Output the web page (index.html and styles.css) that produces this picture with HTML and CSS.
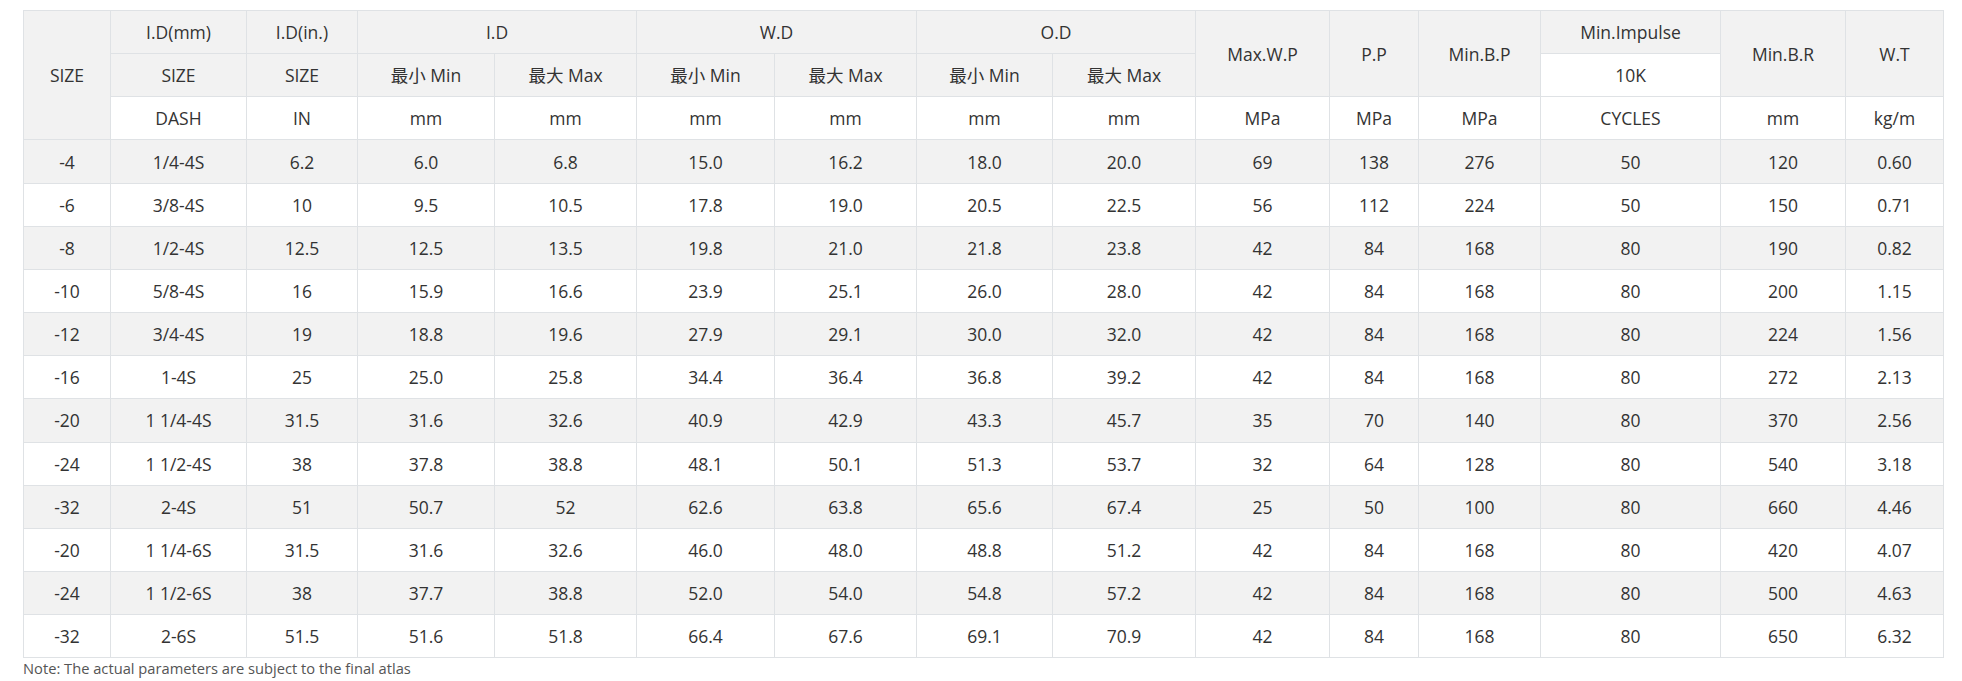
FILE: index.html
```html
<!DOCTYPE html>
<html lang="zh">
<head>
<meta charset="utf-8">
<title>Hose specification</title>
<link rel="stylesheet" href="styles.css">
</head>
<body>
<div class="wrap">
<table class="spec">
<colgroup>
<col style="width:87px"><col style="width:136px"><col style="width:111px"><col style="width:137px"><col style="width:142px"><col style="width:138px"><col style="width:142px"><col style="width:136px"><col style="width:143px"><col style="width:134px"><col style="width:89px"><col style="width:122px"><col style="width:180px"><col style="width:125px"><col style="width:98px">
</colgroup>
<thead>
<tr class="hd">
<td rowspan="3">SIZE</td>
<td>I.D(mm)</td>
<td>I.D(in.)</td>
<td colspan="2">I.D</td>
<td colspan="2">W.D</td>
<td colspan="2">O.D</td>
<td rowspan="2">Max.W.P</td>
<td rowspan="2">P.P</td>
<td rowspan="2">Min.B.P</td>
<td>Min.Impulse</td>
<td rowspan="2">Min.B.R</td>
<td rowspan="2">W.T</td>
</tr>
<tr class="hd">
<td>SIZE</td>
<td>SIZE</td>
<td>最小 Min</td>
<td>最大 Max</td>
<td>最小 Min</td>
<td>最大 Max</td>
<td>最小 Min</td>
<td>最大 Max</td>
<td class="white">10K</td>
</tr>
<tr class="units">
<td>DASH</td><td>IN</td><td>mm</td><td>mm</td><td>mm</td><td>mm</td><td>mm</td><td>mm</td><td>MPa</td><td>MPa</td><td>MPa</td><td>CYCLES</td><td>mm</td><td>kg/m</td>
</tr>
</thead>
<tbody>
<tr><td>-4</td><td>1/4-4S</td><td>6.2</td><td>6.0</td><td>6.8</td><td>15.0</td><td>16.2</td><td>18.0</td><td>20.0</td><td>69</td><td>138</td><td>276</td><td>50</td><td>120</td><td>0.60</td></tr>
<tr><td>-6</td><td>3/8-4S</td><td>10</td><td>9.5</td><td>10.5</td><td>17.8</td><td>19.0</td><td>20.5</td><td>22.5</td><td>56</td><td>112</td><td>224</td><td>50</td><td>150</td><td>0.71</td></tr>
<tr><td>-8</td><td>1/2-4S</td><td>12.5</td><td>12.5</td><td>13.5</td><td>19.8</td><td>21.0</td><td>21.8</td><td>23.8</td><td>42</td><td>84</td><td>168</td><td>80</td><td>190</td><td>0.82</td></tr>
<tr><td>-10</td><td>5/8-4S</td><td>16</td><td>15.9</td><td>16.6</td><td>23.9</td><td>25.1</td><td>26.0</td><td>28.0</td><td>42</td><td>84</td><td>168</td><td>80</td><td>200</td><td>1.15</td></tr>
<tr><td>-12</td><td>3/4-4S</td><td>19</td><td>18.8</td><td>19.6</td><td>27.9</td><td>29.1</td><td>30.0</td><td>32.0</td><td>42</td><td>84</td><td>168</td><td>80</td><td>224</td><td>1.56</td></tr>
<tr><td>-16</td><td>1-4S</td><td>25</td><td>25.0</td><td>25.8</td><td>34.4</td><td>36.4</td><td>36.8</td><td>39.2</td><td>42</td><td>84</td><td>168</td><td>80</td><td>272</td><td>2.13</td></tr>
<tr><td>-20</td><td>1 1/4-4S</td><td>31.5</td><td>31.6</td><td>32.6</td><td>40.9</td><td>42.9</td><td>43.3</td><td>45.7</td><td>35</td><td>70</td><td>140</td><td>80</td><td>370</td><td>2.56</td></tr>
<tr><td>-24</td><td>1 1/2-4S</td><td>38</td><td>37.8</td><td>38.8</td><td>48.1</td><td>50.1</td><td>51.3</td><td>53.7</td><td>32</td><td>64</td><td>128</td><td>80</td><td>540</td><td>3.18</td></tr>
<tr><td>-32</td><td>2-4S</td><td>51</td><td>50.7</td><td>52</td><td>62.6</td><td>63.8</td><td>65.6</td><td>67.4</td><td>25</td><td>50</td><td>100</td><td>80</td><td>660</td><td>4.46</td></tr>
<tr><td>-20</td><td>1 1/4-6S</td><td>31.5</td><td>31.6</td><td>32.6</td><td>46.0</td><td>48.0</td><td>48.8</td><td>51.2</td><td>42</td><td>84</td><td>168</td><td>80</td><td>420</td><td>4.07</td></tr>
<tr><td>-24</td><td>1 1/2-6S</td><td>38</td><td>37.7</td><td>38.8</td><td>52.0</td><td>54.0</td><td>54.8</td><td>57.2</td><td>42</td><td>84</td><td>168</td><td>80</td><td>500</td><td>4.63</td></tr>
<tr><td>-32</td><td>2-6S</td><td>51.5</td><td>51.6</td><td>51.8</td><td>66.4</td><td>67.6</td><td>69.1</td><td>70.9</td><td>42</td><td>84</td><td>168</td><td>80</td><td>650</td><td>6.32</td></tr>
</tbody>
</table>
<p class="note">Note: The actual parameters are subject to the final atlas</p>
</div>
</body>
</html>
```
FILE: styles.css
```css
html, body {
  margin: 0;
  padding: 0;
  background: #ffffff;
}
body {
  font-family: "Open Sans", "Noto Sans CJK SC", sans-serif;
  color: #333333;
}
.wrap {
  padding: 10px 19px 0 23px;
}
.spec {
  border-collapse: collapse;
  table-layout: fixed;
  width: 1920px;
  font-size: 17.5px;
}
.spec td {
  border: 1px solid #dfe2e5;
  text-align: center;
  vertical-align: middle;
  padding: 0 4px;
  height: 42.17px;
  line-height: 24px;
  white-space: nowrap;
}
.spec .hd td {
  background: #f2f2f2;
}
.spec .hd td.white {
  background: #ffffff;
}
.spec .units td {
  background: #ffffff;
}
.spec tbody tr:nth-child(odd) td {
  background: #f2f2f2;
}
.spec tbody tr:nth-child(even) td {
  background: #ffffff;
}
.note {
  margin: 0;
  padding-top: 1px;
  font-size: 14.7px;
  color: #555555;
  line-height: 19px;
}
```
